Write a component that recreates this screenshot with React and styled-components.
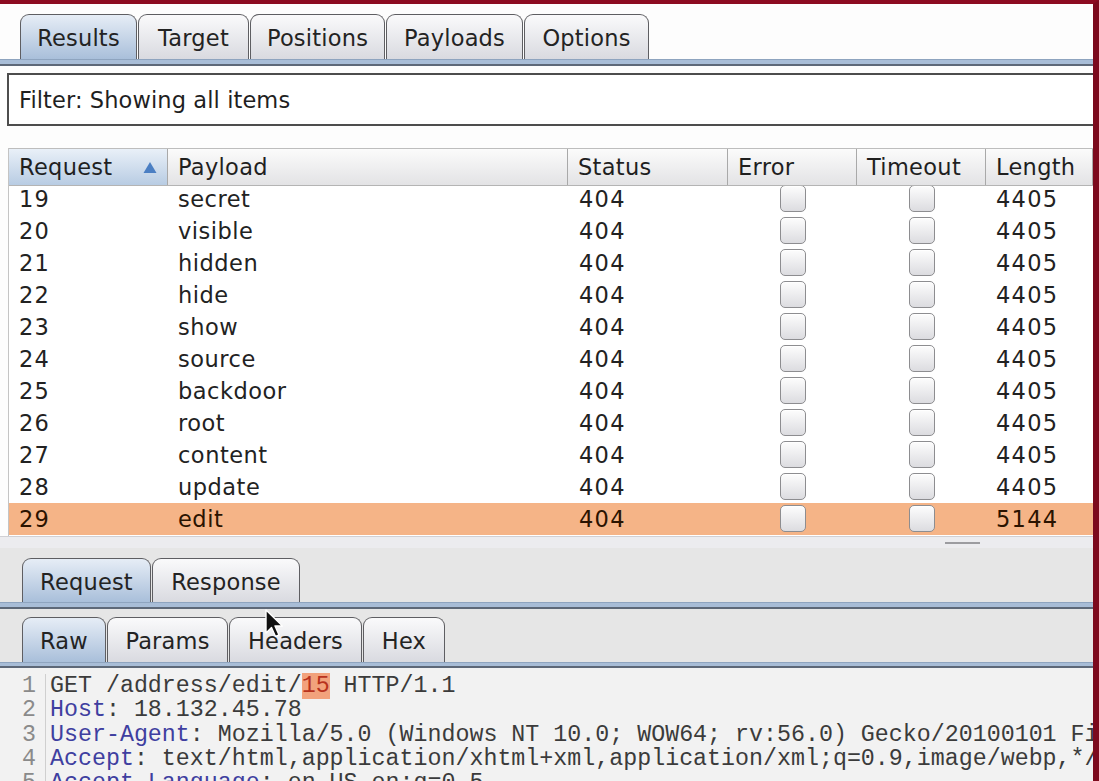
import React from 'react';
import styled, { createGlobalStyle } from 'styled-components';

const GlobalStyle = createGlobalStyle`
  html, body { margin: 0; padding: 0; background: #fff; }
  body { font-family: "DejaVu Sans", "Noto Sans", sans-serif; }
  * { box-sizing: border-box; }
`;

const COLS = '159px 400px 160px 129px 129px 1fr';

const Window = styled.div`
  position: relative;
  width: 1099px;
  height: 781px;
  border-top: 4px solid #8c0b21;
  border-right: 6px solid #7c0a1d;
  background: #fcfcfc;
  display: flex;
  flex-direction: column;
  overflow: hidden;
  color: #1f1f1f;
  font-size: 22.5px;
`;

const TabStrip = styled.div`
  display: flex;
  gap: 1px;
  align-items: flex-end;
  padding: ${(p) => p.$top}px 0 0 ${(p) => p.$left}px;
  background: ${(p) => p.$bg};
`;

const Tab = styled.div`
  width: ${(p) => p.$w}px;
  height: ${(p) => p.$h}px;
  display: flex;
  align-items: center;
  justify-content: center;
  border: 1.5px solid #5e5e62;
  border-bottom: none;
  border-radius: 9px 9px 0 0;
  background: ${(p) =>
    p.$active ? 'linear-gradient(#e6edf6, #a9bfda)' : 'linear-gradient(#fafafb, #d9dae0)'};
  color: #232323;
  letter-spacing: 0.2px;
  padding-top: 2px;
`;

const TabRule = styled.div`
  flex: none;
  height: ${(p) => p.$h}px;
  background: #a8bdd7;
  border-top: 1px solid #8ea4bf;
  border-bottom: 2px solid #5d6878;
`;

const MainPanel = styled.div`
  background: #fdfdfd;
  padding: 7px 0 0 7px;
  flex: none;
`;

const FilterBar = styled.div`
  height: 53px;
  border: 2px solid #4d4d4d;
  border-right: none;
  display: flex;
  align-items: center;
  padding-left: 10px;
  background: #fff;
  letter-spacing: 0.1px;
`;

const Table = styled.div`
  margin: 22px 0 0 1px;
  display: flex;
  flex-direction: column;
  border-left: 1px solid #c4c4c4;
`;

const HeaderRow = styled.div`
  display: grid;
  grid-template-columns: ${COLS};
  height: 38px;
  border-top: 1px solid #bdbdbd;
  border-bottom: 1px solid #b4b4b4;
`;

const HeadCell = styled.div`
  display: flex;
  align-items: center;
  justify-content: space-between;
  padding: 0 10px 0 10px;
  border-right: 1px solid #a9a9a9;
  background: ${(p) =>
    p.$sorted ? 'linear-gradient(#e9f0f8, #b8cce3)' : 'linear-gradient(#fbfbfb, #e3e3e5)'};
  letter-spacing: 0.3px;
`;

const SortArrow = styled.svg`
  width: 14px;
  height: 13px;
  flex: none;
`;

const Body = styled.div`
  height: 350px;
  overflow: hidden;
  background: #fff;
`;

const Rows = styled.div`
  margin-top: -3px;
`;

const Row = styled.div`
  display: grid;
  grid-template-columns: ${COLS};
  height: 32px;
  background: ${(p) => (p.$selected ? '#f5b487' : 'transparent')};
  color: ${(p) => (p.$selected ? '#2b1300' : '#222')};
`;

const Cell = styled.div`
  display: flex;
  align-items: center;
  justify-content: ${(p) => (p.$center ? 'center' : 'flex-start')};
  padding-left: ${(p) => (p.$center ? 0 : p.$pad || 10)}px;
  letter-spacing: ${(p) => (p.$num ? '1.3px' : '0.5px')};
  white-space: nowrap;
`;

const Check = styled.span`
  width: 26px;
  height: 27px;
  border: 1.5px solid #8d8d90;
  border-radius: 5px;
  background: linear-gradient(#fdfdfd, #dcdce0);
  box-shadow: inset 0 1px 0 #fff;
  margin-top: -2px;
`;

const Splitter = styled.div`
  flex: none;
  height: 12px;
  background: #ececef;
  border-top: 1px solid #d0d0d4;
  display: flex;
  justify-content: flex-end;
  padding-right: 113px;
`;

const Grip = styled.span`
  width: 35px;
  height: 2px;
  background: #9c9ca0;
  margin-top: 5px;
`;

const LowerPanel = styled.div`
  flex: 1;
  min-height: 0;
  display: flex;
  flex-direction: column;
  background: #e6e6e6;
`;

const Gap = styled.div`
  flex: none;
  height: ${(p) => p.$h}px;
`;

const Editor = styled.div`
  flex: 1;
  min-height: 0;
  display: flex;
  overflow: hidden;
  background: #f2f2f2;
  font-family: "Liberation Mono", "DejaVu Sans Mono", monospace;
  font-size: 23.3px;
  line-height: 24.3px;
  padding-top: 6px;
`;

const Gutter = styled.div`
  flex: none;
  width: 46px;
  border-right: 1px solid #cfcfcf;
  text-align: right;
  padding-right: 9px;
  color: #8a8a8a;
`;

const Code = styled.div`
  padding-left: 4px;
  white-space: pre;
  color: #3b3b3b;
`;

const HeaderName = styled.span`
  color: #3f3fa0;
`;

const Marker = styled.span`
  background: #f2a27c;
  color: #b8321e;
`;

const Cursor = styled.svg`
  position: absolute;
  left: 264px;
  top: 605px;
  width: 22px;
  height: 30px;
`;

const topTabs = [
  ['Results', 117, true],
  ['Target', 111],
  ['Positions', 135],
  ['Payloads', 137],
  ['Options', 125],
];

const reqTabs = [
  ['Request', 129, true],
  ['Response', 148],
];

const subTabs = [
  ['Raw', 84, true],
  ['Params', 121],
  ['Headers', 133],
  ['Hex', 82],
];

const rows = [
  [19, 'secret'],
  [20, 'visible'],
  [21, 'hidden'],
  [22, 'hide'],
  [23, 'show'],
  [24, 'source'],
  [25, 'backdoor'],
  [26, 'root'],
  [27, 'content'],
  [28, 'update'],
  [29, 'edit', '5144', true],
];

export default function App() {
  return (
    <>
      <GlobalStyle />
      <Window>
        <TabStrip $top={10} $left={20} $bg="#fdfdfd">
          {topTabs.map(([t, w, a]) => (
            <Tab key={t} $w={w} $h={45} $active={a}>{t}</Tab>
          ))}
        </TabStrip>
        <TabRule $h={7} />
        <MainPanel>
          <FilterBar>Filter: Showing all items</FilterBar>
          <Table>
            <HeaderRow>
              <HeadCell $sorted>
                <span>Request</span>
                <SortArrow viewBox="0 0 14 13">
                  <path d="M7 1 L13.5 12 L0.5 12 Z" fill="#4b7fc3" />
                </SortArrow>
              </HeadCell>
              <HeadCell>Payload</HeadCell>
              <HeadCell>Status</HeadCell>
              <HeadCell>Error</HeadCell>
              <HeadCell>Timeout</HeadCell>
              <HeadCell>Length</HeadCell>
            </HeaderRow>
            <Body>
              <Rows>
                {rows.map(([n, p, len, sel]) => (
                  <Row key={n} $selected={sel}>
                    <Cell $num>{n}</Cell>
                    <Cell>{p}</Cell>
                    <Cell $num $pad={11}>404</Cell>
                    <Cell $center><Check /></Cell>
                    <Cell $center><Check /></Cell>
                    <Cell $num>{len || '4405'}</Cell>
                  </Row>
                ))}
              </Rows>
            </Body>
          </Table>
        </MainPanel>
        <Splitter><Grip /></Splitter>
        <LowerPanel>
          <TabStrip $top={10} $left={22} $bg="transparent">
            {reqTabs.map(([t, w, a]) => (
              <Tab key={t} $w={w} $h={44} $active={a}>{t}</Tab>
            ))}
          </TabStrip>
          <TabRule $h={7} />
          <Gap $h={8} />
          <TabStrip $top={0} $left={22} $bg="transparent">
            {subTabs.map(([t, w, a]) => (
              <Tab key={t} $w={w} $h={45} $active={a}>{t}</Tab>
            ))}
          </TabStrip>
          <TabRule $h={6} />
          <Editor>
            <Gutter>
              <div>1</div>
              <div>2</div>
              <div>3</div>
              <div>4</div>
              <div>5</div>
            </Gutter>
            <Code>
              <div>GET /address/edit/<Marker>15</Marker> HTTP/1.1</div>
              <div><HeaderName>Host</HeaderName>: 18.132.45.78</div>
              <div><HeaderName>User-Agent</HeaderName>: Mozilla/5.0 (Windows NT 10.0; WOW64; rv:56.0) Gecko/20100101 Firefox/56.0</div>
              <div><HeaderName>Accept</HeaderName>: text/html,application/xhtml+xml,application/xml;q=0.9,image/webp,*/*;q=0.8</div>
              <div><HeaderName>Accept-Language</HeaderName>: en-US,en;q=0.5</div>
            </Code>
          </Editor>
        </LowerPanel>
        <Cursor viewBox="0 0 22 30">
          <path d="M2 1 L2 24 L7.5 18.5 L11.5 27.5 L15 26 L11 17 L18.5 17 Z" fill="#111" stroke="#fff" strokeWidth="1.4" strokeLinejoin="round" />
        </Cursor>
      </Window>
    </>
  );
}
